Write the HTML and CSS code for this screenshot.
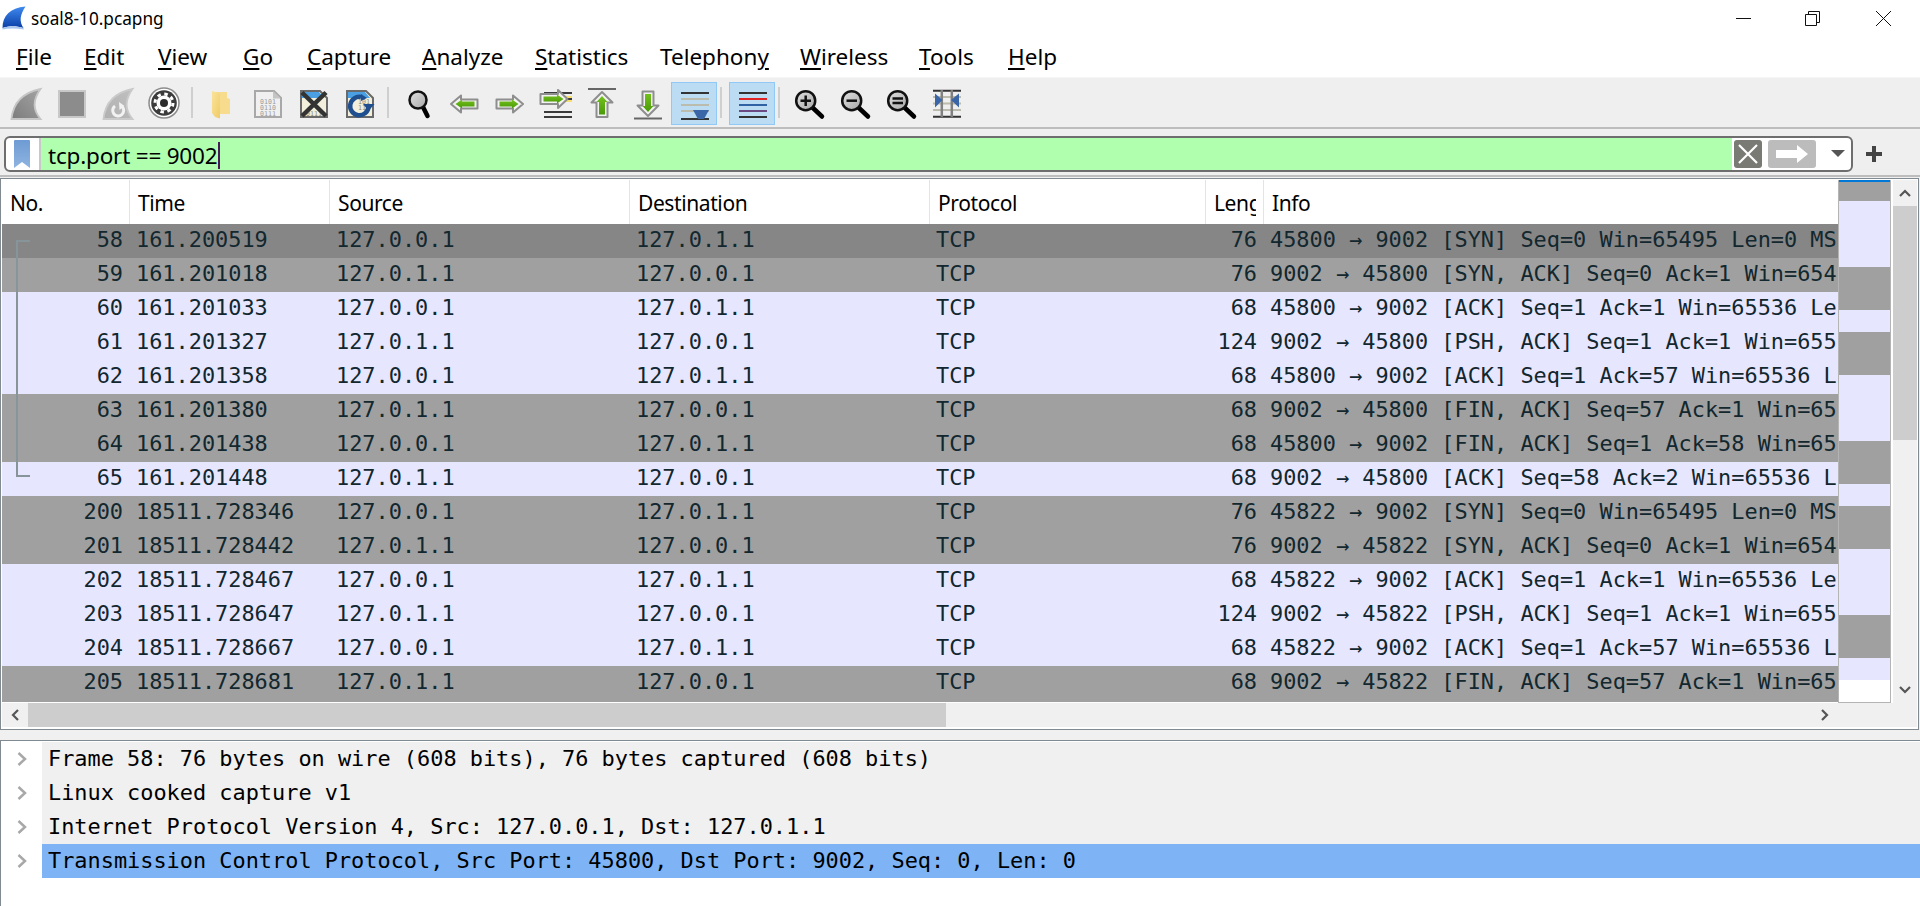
FILE: index.html
```html
<!DOCTYPE html>
<html lang="en">
<head>
<meta charset="utf-8">
<title>soal8-10.pcapng</title>
<link rel="stylesheet" href="styles.css">
</head>
<body>
<svg class="defs" aria-hidden="true">
  <defs>
    <linearGradient id="gFin" x1="0" y1="1" x2="1" y2="0"><stop offset="0" stop-color="#7c7c7c"/><stop offset="1" stop-color="#a4a4a4"/></linearGradient>
    <linearGradient id="gFinLight" x1="0" y1="1" x2="1" y2="0"><stop offset="0" stop-color="#b0b0b0"/><stop offset="1" stop-color="#c0c0c0"/></linearGradient>
    <linearGradient id="gBlue" x1="0" y1="0" x2="0" y2="1"><stop offset="0" stop-color="#3f8af0"/><stop offset="1" stop-color="#0b3fa6"/></linearGradient>
    <linearGradient id="gBook" x1="0" y1="0" x2="0" y2="1"><stop offset="0" stop-color="#6e9bd4"/><stop offset="1" stop-color="#8fb4e0"/></linearGradient>
    <linearGradient id="gGreen" x1="0" y1="0" x2="0" y2="1"><stop offset="0" stop-color="#74c01c"/><stop offset="1" stop-color="#4a9a08"/></linearGradient>
    <linearGradient id="gLens" x1="0" y1="0" x2="1" y2="1"><stop offset="0" stop-color="#e0e0e0"/><stop offset="1" stop-color="#a8a8a8"/></linearGradient>
    <linearGradient id="gFolder" x1="0" y1="0" x2="1" y2="1"><stop offset="0" stop-color="#fae39a"/><stop offset="1" stop-color="#f0cc68"/></linearGradient>
  </defs>
</svg>

<header class="titlebar">
  <div class="title">
    <svg class="app-icon" viewBox="0 0 24 24"><path d="M0.500 22 C0.500 10 8 2 23.500 0.500 C18 9 17 15 21.500 22 C14 19.500 7 19.500 0.500 22 Z" fill="url(#gBlue)"/><path d="M0.500 22 C7 19.500 14 19.500 21.500 22 L21.800 23.500 C14 22 7 22 0.500 23.500 Z" fill="#a9c6ee"/></svg>
    <span>soal8-10.pcapng</span>
  </div>
  <div class="win-controls">
    <svg class="win-icon" viewBox="0 0 15 15"><path d="M0 7.500 H15" class="win-line"/></svg>
    <svg class="win-icon" viewBox="0 0 15 15"><path d="M3.500 3.500 V0.500 H14.500 V11.500 H11.500 M0.500 3.500 H11.500 V14.500 H0.500 Z" class="win-line"/></svg>
    <svg class="win-icon win-close" viewBox="0 0 15 15"><path d="M0 0 L15 15 M15 0 L0 15" class="win-line"/></svg>
  </div>
</header>

<nav class="menubar">
  <span><u>F</u>ile</span><span><u>E</u>dit</span><span><u>V</u>iew</span><span><u>G</u>o</span><span><u>C</u>apture</span><span><u>A</u>nalyze</span><span><u>S</u>tatistics</span><span>Telephon<u>y</u></span><span><u>W</u>ireless</span><span><u>T</u>ools</span><span><u>H</u>elp</span>
</nav>

<div class="toolbar">
  <div class="slot"><svg class="ti" viewBox="0 0 46 40"><path d="M8.500 35 C10 20 18 9 37.500 5 C31 14 29 25 37.500 35 Z" fill="url(#gFin)" stroke="#c6c6c6" stroke-width="1.800"/></svg></div>
  <div class="slot"><svg class="ti" viewBox="0 0 46 40"><rect x="10" y="7" width="26" height="26" fill="#8c8c8c" stroke="#c8c8c8" stroke-width="2"/></svg></div>
  <div class="slot"><svg class="ti" viewBox="0 0 46 40"><path d="M8.500 35 C10 20 18 9 37.500 5 C31 14 29 25 37.500 35 Z" fill="url(#gFinLight)" stroke="#cacaca" stroke-width="1.800"/><path d="M27 22.500 A5.500 5.500 0 1 1 20 22" fill="none" stroke="#f2f2f2" stroke-width="3"/><path d="M24 18 L29.500 22 L24.500 26 Z" fill="#f2f2f2"/></svg></div>
  <div class="slot"><svg class="ti" viewBox="0 0 46 40"><circle cx="23" cy="19" r="15" fill="#fff" stroke="#8c8c8c" stroke-width="1.500"/><circle cx="23" cy="19" r="12.800" fill="#3c3c3c"/><circle cx="23" cy="19" r="7.500" fill="#fff"/><circle cx="23" cy="19" r="9" fill="none" stroke="#fff" stroke-width="3" stroke-dasharray="3.500 3.570"/><circle cx="23" cy="19" r="4" fill="#2c2c2c"/></svg></div>
  <div class="sep"></div>
  <div class="slot"><svg class="ti" viewBox="0 0 46 40"><path d="M16 8 H28 V14 L31 15 V30 H16 Z" fill="#f6dc8c"/><path d="M13 7 L21 9.500 V34.500 L16 33 L13 29 Z" fill="url(#gFolder)"/></svg></div>
  <div class="slot"><svg class="ti" viewBox="0 0 46 40"><path d="M10 7 H29 L36 14 V33 H10 Z" fill="#f0f0f0" stroke="#a8a8a8" stroke-width="2"/><path d="M28 7 V14.500 H36 Z" fill="#c4c4c4"/><text x="15" y="19.500" class="bits">0101</text><text x="15" y="26" class="bits">0110</text><text x="15" y="32" class="bits">0111</text></svg></div>
  <div class="slot"><svg class="ti" viewBox="0 0 46 40"><path d="M10 7 H29 L36 14 V33 H10 Z" fill="#f2f0dc" stroke="#6a6a6a" stroke-width="2"/><path d="M11 8 H28 L33 14 H11 Z" fill="#4aa0e2"/><text x="15" y="32" class="bits bits-dark">0111</text><path d="M11 8.500 L35 32 M35 8.500 L11 32" stroke="#333" stroke-width="4.500"/></svg></div>
  <div class="slot"><svg class="ti" viewBox="0 0 46 40"><path d="M10 7 H29 L36 14 V33 H10 Z" fill="#f2f0dc" stroke="#6a6a6a" stroke-width="2"/><path d="M11 8 H28 L33 14 H11 Z" fill="#4aa0e2"/><text x="21" y="20" class="bits bits-dark">101</text><text x="21" y="26" class="bits bits-dark">110</text><path d="M24 13 A9.200 9.200 0 1 0 31.500 23" fill="none" stroke="#1f4f8f" stroke-width="4.500"/><path d="M26 20 H37.500 L31.500 27 Z" fill="#1f4f8f"/><path d="M24 10 L30 14 L24 17 Z" fill="#1f4f8f"/></svg></div>
  <div class="sep"></div>
  <div class="slot"><svg class="ti" viewBox="0 0 46 40"><path d="M28 23 L32.500 32" class="handle"/><circle cx="23" cy="16" r="8.500" class="lens"/></svg></div>
  <div class="slot"><svg class="ti" viewBox="0 0 46 40"><path d="M10 20 L20 11.500 V15.500 H36.500 V24.500 H20 V28.500 Z" class="arrow-out"/><path d="M14.500 20 L21 15.500 V17.500 H33.500 V22.500 H21 V24.500 Z" fill="url(#gGreen)"/></svg></div>
  <div class="slot"><svg class="ti" viewBox="0 0 46 40"><path d="M36 20 L26 11.500 V15.500 H9.500 V24.500 H26 V28.500 Z" class="arrow-out"/><path d="M31.500 20 L25 15.500 V17.500 H12.500 V22.500 H25 V24.500 Z" fill="url(#gGreen)"/></svg></div>
  <div class="slot"><svg class="ti" viewBox="0 0 46 40"><rect x="33" y="12" width="6" height="6" fill="#f8e06a"/><path d="M11 9 H39 M26 15 H39 M11 28 H39 M11 33 H39" stroke="#3a3a3a" stroke-width="2"/><path d="M34.500 15 L25 6 V10 H7.500 V20 H25 V24 Z" class="arrow-out"/><path d="M30.500 15 L24 10.500 V12.500 H10.500 V17.500 H24 V19.500 Z" fill="url(#gGreen)"/></svg></div>
  <div class="slot"><svg class="ti" viewBox="0 0 46 40"><path d="M9 5 H37" stroke="#666" stroke-width="2"/><path d="M23 8 L33.500 18.500 H28.500 V33 H17.500 V18.500 H12.500 Z" class="arrow-out"/><path d="M23 12 L28.500 18 H26 V30.500 H20 V18 H17.500 Z" fill="url(#gGreen)"/></svg></div>
  <div class="slot"><svg class="ti" viewBox="0 0 46 40"><path d="M9 34.500 H37" stroke="#666" stroke-width="2"/><path d="M23 32 L33.500 21.500 H28.500 V7.500 H17.500 V21.500 H12.500 Z" class="arrow-out"/><path d="M23 28 L28.500 22 H26 V10 H20 V22 H17.500 Z" fill="url(#gGreen)"/></svg></div>
  <div class="slot slot-on"><svg class="ti" viewBox="0 0 46 40"><path d="M10 15 H38 M10 21 H38 M10 27 H38" stroke="#bcbcae" stroke-width="2"/><path d="M10 9 H38 M10 35 H38" stroke="#333" stroke-width="2"/><path d="M22 26 H38 L33 35 H27 Z" fill="#3a66a8"/></svg></div>
  <div class="sep sep-tight"></div>
  <div class="slot slot-on"><svg class="ti" viewBox="0 0 46 40"><path d="M10 9 H38 M10 33 H38" stroke="#333" stroke-width="2"/><path d="M10 15 H38" stroke="#e02424" stroke-width="2"/><path d="M10 21 H38" stroke="#3062a4" stroke-width="2"/><path d="M10 27 H38" stroke="#6a4a80" stroke-width="2"/></svg></div>
  <div class="sep sep-tight"></div>
  <div class="slot"><svg class="ti" viewBox="0 0 46 40"><path d="M26 24 L35 32.500" class="handle"/><circle cx="18.700" cy="16.700" r="9.500" class="lens"/><path d="M13.500 16.700 H24 M18.700 11.500 V22" class="glyph"/></svg></div>
  <div class="slot"><svg class="ti" viewBox="0 0 46 40"><path d="M26 24 L35 32.500" class="handle"/><circle cx="18.700" cy="16.700" r="9.500" class="lens"/><path d="M13.500 16.700 H24" class="glyph"/></svg></div>
  <div class="slot"><svg class="ti" viewBox="0 0 46 40"><path d="M26 24 L35 32.500" class="handle"/><circle cx="18.700" cy="16.700" r="9.500" class="lens"/><path d="M13.500 14.500 H24 M13.500 19 H24" class="glyph"/></svg></div>
  <div class="slot"><svg class="ti" viewBox="0 0 46 40"><path d="M8 13 H36 M8 19.500 H36 M8 26 H36" stroke="#bcbcae" stroke-width="2"/><path d="M8 6.800 H36 M8 32.800 H36" stroke="#333" stroke-width="2"/><path d="M16.800 6 V33 M26.800 6 V33" stroke="#808080" stroke-width="2.500"/><path d="M10 9.500 L17.500 16 L10 23.500 Z M34 9.500 L26 16 L34 23.500 Z" fill="#3a66a8"/></svg></div>
</div>

<div class="filterbar">
  <div class="filter">
    <div class="bookmark"><svg class="book-icon" viewBox="0 0 16 28"><path d="M1 0 H15 Q16 0 16 1 V28 L8 22 L0 28 V1 Q0 0 1 0 Z" fill="url(#gBook)"/></svg></div>
    <div class="filter-text"><span class="caret">tcp.port == 9002</span></div>
    <div class="filter-btn clear"><svg class="btn-x" viewBox="0 0 28 28"><path d="M5 5 L23 23 M23 5 L5 23" stroke="#fff" stroke-width="2.200"/></svg></div>
    <div class="filter-btn apply"><svg class="btn-arrow" viewBox="0 0 48 28"><path d="M8 10 H29 V5 L40 14 L29 23 V18 H8 Z" fill="#fff"/></svg></div>
    <div class="drop"></div>
  </div>
  <svg class="plus" viewBox="0 0 16 16"><path d="M8 0 V16 M0 8 H16" stroke="#444" stroke-width="4"/></svg>
</div>

<section class="frame">
  <div class="pane">
    <div class="list">
      <div class="row head"><div class="c-no">No.</div><div class="c-time">Time</div><div class="c-addr">Source</div><div class="c-addr">Destination</div><div class="c-proto">Protocol</div><div class="c-len"><span class="clip">Length</span></div><div class="c-info">Info</div></div>
      <div class="row r-sel"><div class="c-no">58</div><div class="c-time">161.200519</div><div class="c-addr">127.0.0.1</div><div class="c-addr">127.0.1.1</div><div class="c-proto">TCP</div><div class="c-len">76</div><div class="c-info">45800 → 9002 [SYN] Seq=0 Win=65495 Len=0 MS</div></div>
      <div class="row r-gray"><div class="c-no">59</div><div class="c-time">161.201018</div><div class="c-addr">127.0.1.1</div><div class="c-addr">127.0.0.1</div><div class="c-proto">TCP</div><div class="c-len">76</div><div class="c-info">9002 → 45800 [SYN, ACK] Seq=0 Ack=1 Win=654</div></div>
      <div class="row r-lav"><div class="c-no">60</div><div class="c-time">161.201033</div><div class="c-addr">127.0.0.1</div><div class="c-addr">127.0.1.1</div><div class="c-proto">TCP</div><div class="c-len">68</div><div class="c-info">45800 → 9002 [ACK] Seq=1 Ack=1 Win=65536 Le</div></div>
      <div class="row r-lav"><div class="c-no">61</div><div class="c-time">161.201327</div><div class="c-addr">127.0.1.1</div><div class="c-addr">127.0.0.1</div><div class="c-proto">TCP</div><div class="c-len">124</div><div class="c-info">9002 → 45800 [PSH, ACK] Seq=1 Ack=1 Win=655</div></div>
      <div class="row r-lav"><div class="c-no">62</div><div class="c-time">161.201358</div><div class="c-addr">127.0.0.1</div><div class="c-addr">127.0.1.1</div><div class="c-proto">TCP</div><div class="c-len">68</div><div class="c-info">45800 → 9002 [ACK] Seq=1 Ack=57 Win=65536 L</div></div>
      <div class="row r-gray"><div class="c-no">63</div><div class="c-time">161.201380</div><div class="c-addr">127.0.1.1</div><div class="c-addr">127.0.0.1</div><div class="c-proto">TCP</div><div class="c-len">68</div><div class="c-info">9002 → 45800 [FIN, ACK] Seq=57 Ack=1 Win=65</div></div>
      <div class="row r-gray"><div class="c-no">64</div><div class="c-time">161.201438</div><div class="c-addr">127.0.0.1</div><div class="c-addr">127.0.1.1</div><div class="c-proto">TCP</div><div class="c-len">68</div><div class="c-info">45800 → 9002 [FIN, ACK] Seq=1 Ack=58 Win=65</div></div>
      <div class="row r-lav"><div class="c-no">65</div><div class="c-time">161.201448</div><div class="c-addr">127.0.1.1</div><div class="c-addr">127.0.0.1</div><div class="c-proto">TCP</div><div class="c-len">68</div><div class="c-info">9002 → 45800 [ACK] Seq=58 Ack=2 Win=65536 L</div></div>
      <div class="row r-gray"><div class="c-no">200</div><div class="c-time">18511.728346</div><div class="c-addr">127.0.0.1</div><div class="c-addr">127.0.1.1</div><div class="c-proto">TCP</div><div class="c-len">76</div><div class="c-info">45822 → 9002 [SYN] Seq=0 Win=65495 Len=0 MS</div></div>
      <div class="row r-gray"><div class="c-no">201</div><div class="c-time">18511.728442</div><div class="c-addr">127.0.1.1</div><div class="c-addr">127.0.0.1</div><div class="c-proto">TCP</div><div class="c-len">76</div><div class="c-info">9002 → 45822 [SYN, ACK] Seq=0 Ack=1 Win=654</div></div>
      <div class="row r-lav"><div class="c-no">202</div><div class="c-time">18511.728467</div><div class="c-addr">127.0.0.1</div><div class="c-addr">127.0.1.1</div><div class="c-proto">TCP</div><div class="c-len">68</div><div class="c-info">45822 → 9002 [ACK] Seq=1 Ack=1 Win=65536 Le</div></div>
      <div class="row r-lav"><div class="c-no">203</div><div class="c-time">18511.728647</div><div class="c-addr">127.0.1.1</div><div class="c-addr">127.0.0.1</div><div class="c-proto">TCP</div><div class="c-len">124</div><div class="c-info">9002 → 45822 [PSH, ACK] Seq=1 Ack=1 Win=655</div></div>
      <div class="row r-lav"><div class="c-no">204</div><div class="c-time">18511.728667</div><div class="c-addr">127.0.0.1</div><div class="c-addr">127.0.1.1</div><div class="c-proto">TCP</div><div class="c-len">68</div><div class="c-info">45822 → 9002 [ACK] Seq=1 Ack=57 Win=65536 L</div></div>
      <div class="row r-gray r-last"><div class="c-no">205</div><div class="c-time">18511.728681</div><div class="c-addr">127.0.1.1</div><div class="c-addr">127.0.0.1</div><div class="c-proto">TCP</div><div class="c-len">68</div><div class="c-info">9002 → 45822 [FIN, ACK] Seq=57 Ack=1 Win=65</div></div>
      <div class="bracket"></div>
    </div>
    <div class="minimap">
      <div class="m-blue"></div>
      <div class="m-g m19"></div><div class="m-l m66"></div><div class="m-g m43"></div><div class="m-l m22"></div><div class="m-g m43"></div><div class="m-l m66"></div><div class="m-g m43"></div><div class="m-l m22"></div><div class="m-g m43"></div><div class="m-l m66"></div><div class="m-g m43"></div><div class="m-l m22"></div>
    </div>
    <div class="vscroll">
      <div class="v-btn"><svg class="chev" viewBox="0 0 12 8"><path d="M1 7 L6 2 L11 7" class="chev-line"/></svg></div>
      <div class="v-thumb"></div>
      <div class="v-track"></div>
      <div class="v-btn"><svg class="chev" viewBox="0 0 12 8"><path d="M1 1 L6 6 L11 1" class="chev-line"/></svg></div>
    </div>
  </div>
  <div class="hscroll">
    <div class="h-btn"><svg class="chev-h" viewBox="0 0 8 12"><path d="M7 1 L2 6 L7 11" class="chev-line"/></svg></div>
    <div class="h-thumb"></div>
    <div class="h-track"></div>
    <div class="h-btn"><svg class="chev-h" viewBox="0 0 8 12"><path d="M1 1 L6 6 L1 11" class="chev-line"/></svg></div>
  </div>
</section>

<section class="details">
  <div class="d-row"><div class="d-gut"><svg class="d-chev" viewBox="0 0 10 14"><path d="M1.500 1 L8 7 L1.500 13" class="d-line"/></svg></div><div class="d-text">Frame 58: 76 bytes on wire (608 bits), 76 bytes captured (608 bits)</div></div>
  <div class="d-row"><div class="d-gut"><svg class="d-chev" viewBox="0 0 10 14"><path d="M1.500 1 L8 7 L1.500 13" class="d-line"/></svg></div><div class="d-text">Linux cooked capture v1</div></div>
  <div class="d-row"><div class="d-gut"><svg class="d-chev" viewBox="0 0 10 14"><path d="M1.500 1 L8 7 L1.500 13" class="d-line"/></svg></div><div class="d-text">Internet Protocol Version 4, Src: 127.0.0.1, Dst: 127.0.1.1</div></div>
  <div class="d-row"><div class="d-gut"><svg class="d-chev" viewBox="0 0 10 14"><path d="M1.500 1 L8 7 L1.500 13" class="d-line"/></svg></div><div class="d-text d-sel">Transmission Control Protocol, Src Port: 45800, Dst Port: 9002, Seq: 0, Len: 0</div></div>
</section>
</body>
</html>
```

FILE: styles.css
```css
* { box-sizing: border-box; }
html, body { margin: 0; height: 100%; }
body {
  height: 906px;
  overflow: hidden;
  background: #f0f0f0;
  color: #000;
  font-family: "Noto Sans", "Open Sans", sans-serif;
  display: flex;
  flex-direction: column;
}
.defs { position: absolute; width: 0; height: 0; }

/* title bar */
.titlebar { height: 38px; display: flex; justify-content: space-between; align-items: center; padding: 0 29px 2px 2px; flex: none; background: #fff; }
.title { display: flex; align-items: center; gap: 5px; font-size: 17.200px; }
.app-icon { width: 24px; height: 24px; }
.win-controls { display: flex; gap: 54px; align-items: center; }
.win-icon { width: 15px; height: 15px; display: block; }
.win-close { margin-left: 2px; }
.win-line { fill: none; stroke: #111; stroke-width: 1; }

/* menu */
.menubar {
  height: 39px;
  flex: none;
  display: grid;
  grid-template-columns: 68px 74px 85px 64px 115px 113px 125px 140px 119px 89px auto;
  justify-content: start;
  align-items: center;
  padding: 0 0 2px 16px;
  font-size: 22.500px;
  background: #fff;
}
.menubar u { text-decoration-thickness: 2px; text-underline-offset: 3px; }

/* toolbar */
.toolbar {
  height: 52px;
  flex: none;
  display: flex;
  align-items: flex-start;
  padding: 4px 0 0 3px;
  background: #efefef;
  border-top: 1px solid #f6f6f6;
  border-bottom: 2px solid #bdbdbd;
}
.slot { width: 46px; height: 43px; padding-top: 2px; flex: none; }
.slot-on { background: #bcdcf4; box-shadow: inset 0 0 0 1px #90c8f6; }
.ti { width: 46px; height: 40px; display: block; }
.sep { width: 12px; height: 31px; margin-top: 5px; padding-left: 4px; flex: none; }
.sep::before { content: ""; display: block; width: 2px; height: 100%; background: #cfcfcf; }
.sep-tight { padding-left: 3px; }
.bits { font-family: "DejaVu Sans Mono", monospace; font-size: 6.600px; fill: #9a9a9a; }
.bits-dark { fill: #8a8a78; }
.handle { fill: none; stroke: #000; stroke-width: 4.500; stroke-linecap: round; }
.lens { fill: url(#gLens); stroke: #111; stroke-width: 2.500; }
.glyph { fill: none; stroke: #111; stroke-width: 2.500; }
.arrow-out { fill: #f2f2f2; stroke: #8e8e8e; stroke-width: 2; stroke-linejoin: round; }

/* filter bar */
.filterbar {
  height: 46px;
  flex: none;
  margin-top: 2px;
  padding: 5px 0 3px 4px;
  background: #efefef;
  border-bottom: 2px solid #bdbdbd;
  display: flex;
  align-items: flex-start;
}
.filter {
  width: 1849px;
  height: 36px;
  border: 2px solid #6e6e6e;
  border-radius: 6px;
  background: #fff;
  display: flex;
  overflow: hidden;
}
.bookmark { width: 35px; flex: none; border-right: 2px solid #c8c8c8; padding: 2px 0 0 8px; }
.book-icon { width: 16px; height: 28px; display: block; }
.filter-text {
  width: 1691px;
  flex: none;
  background: #afffaf;
  padding-left: 7px;
  font-size: 22.500px;
  letter-spacing: -0.2px;
}
.caret { border-right: 2px solid #4a1a5a; padding-right: 1px; display: inline-block; height: 27px; line-height: 27px; margin-top: 4px; vertical-align: top; }
.filter-btn { flex: none; height: 28px; border-radius: 3px; margin-top: 2px; }
.clear { width: 28px; margin-left: 2px; background: #7a7a74; }
.apply { width: 48px; margin-left: 6px; background: #bcbcbc; }
.btn-x, .btn-arrow { width: 100%; height: 100%; display: block; }
.drop {
  width: 0; height: 0; flex: none;
  margin: 12px 0 0 15px;
  border-left: 7px solid transparent;
  border-right: 7px solid transparent;
  border-top: 7px solid #555;
}
.plus { width: 16px; height: 16px; margin: 10px 0 0 13px; flex: none; }

/* packet list frame */
.frame {
  height: 552px;
  width: 1919px;
  flex: none;
  margin-top: 1px;
  background: #fff;
  border: 1px solid #808a90;
  padding: 1px 1px 2px 1px;
  display: flex;
  flex-direction: column;
}
.pane { height: 523px; display: flex; flex: none; }
.list { width: 1836px; flex: none; position: relative; overflow: hidden; background: #fff; }
.row {
  display: grid;
  grid-template-columns: 127px 200px 300px 300px 276px 58px 1fr;
  height: 34px;
  font-family: "DejaVu Sans Mono", monospace;
  font-size: 21.900px;
  line-height: 32px;
  color: #12272e;
  white-space: nowrap;
}
.row > div { overflow: hidden; }
.c-no { text-align: right; padding-right: 6px; }
.c-time, .c-addr, .c-proto { padding-left: 7px; }
.c-len { text-align: right; padding-right: 6px; }
.c-info { padding-left: 7px; }
.r-sel { background: #868686; }
.r-gray { background: #a0a0a0; }
.r-lav { background: #e7e6ff; }
.r-last { height: 36px; }
.head {
  height: 44px;
  background: #fff;
  color: #000;
  font-family: "Noto Sans", "Open Sans", sans-serif;
  font-size: 21px;
  line-height: 46px;
  letter-spacing: -0.4px;
}
.head > div { padding-left: 8px; }
.head > div + div { border-left: 1px solid #e4e4e4; }
.head .c-no { text-align: left; padding-right: 0; }
.head .c-len { text-align: left; padding: 0 7px 0 8px; }
.clip { display: block; overflow: hidden; }
.bracket {
  position: absolute;
  left: 14px;
  top: 60px;
  width: 14px;
  height: 237px;
  border: 2px solid #87959b;
  border-right: 0;
}
.minimap {
  width: 53px;
  height: 523px;
  flex: none;
  border-left: 1px solid #b4b4b4;
  border-bottom: 1px solid #b4b4b4;
  border-right: 1px solid #b4b4b4;
}
.m-blue { height: 2px; background: #0078d7; }
.m-g { background: #a0a0a0; }
.m-l { background: #e7e6ff; }
.m19 { height: 19px; }
.m22 { height: 22px; }
.m43 { height: 43px; }
.m66 { height: 66px; }
.vscroll { width: 24px; margin-left: 2px; display: flex; flex-direction: column; flex: none; background: #f0f0f0; }
.v-btn { height: 26px; flex: none; display: flex; align-items: center; justify-content: center; background: #f0f0f0; }
.v-thumb { height: 234px; flex: none; background: #cdcdcd; }
.v-track { flex: 1; }
.chev { width: 12px; height: 8px; display: block; }
.chev-h { width: 8px; height: 12px; display: block; }
.chev-line { fill: none; stroke: #555; stroke-width: 2.200; }
.hscroll { height: 24px; display: flex; flex: none; background: #f0f0f0; }
.h-btn { width: 26px; flex: none; display: flex; align-items: center; justify-content: center; }
.h-thumb { width: 918px; flex: none; background: #cdcdcd; }
.h-track { width: 866px; flex: none; }

/* details */
.details {
  flex: 1;
  margin-top: 10px;
  background: #fff;
  border-top: 1px solid #808a90;
  border-left: 1px solid #808a90;
  padding-top: 1px;
  font-family: "DejaVu Sans Mono", monospace;
  font-size: 21.900px;
}
.d-row { display: flex; height: 34px; line-height: 34px; white-space: nowrap; }
.d-gut { width: 41px; flex: none; padding: 10px 0 0 16px; }
.d-chev { width: 10px; height: 14px; display: block; }
.d-line { fill: none; stroke: #a8a8a8; stroke-width: 2.500; }
.d-text { flex: 1; background: #f0f0f0; padding-left: 6px; }
.d-sel { background: #7eb4f5; }
```
